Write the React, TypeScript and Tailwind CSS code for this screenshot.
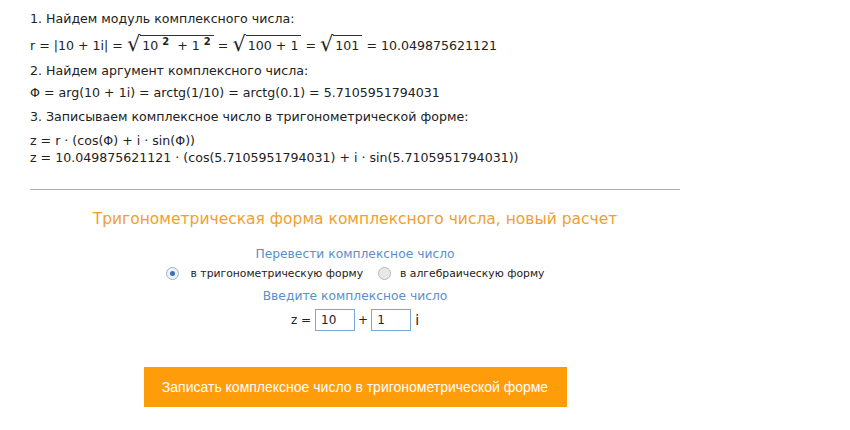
import React from 'react';

function Sqrt({ children }: { children: React.ReactNode }) {
  return (
    <span className="inline-flex items-end">
      <span className="text-[21px] leading-[19px]">√</span>
      <span className="border-t border-[#333] leading-[16px] pt-[2px] pl-[2px] pr-[3px]">{children}</span>
    </span>
  );
}

export default function App() {
  return (
    <div className="w-[850px] h-[430px] bg-white text-[#222] font-['Verdana','DejaVu_Sans',sans-serif]">
      <div className="w-[650px] ml-[30px] pt-[10px] text-[12.6px] leading-[17px]">
        <div>1. Найдем модуль комплексного числа:</div>
        <div className="mt-[8px] flex items-end whitespace-pre h-[19px]">
          <span>r = |10 + 1i| = </span>
          <Sqrt>
            10 <sup className="font-bold text-[10px]">2</sup>  + 1 <sup className="font-bold text-[10px]">2</sup>
          </Sqrt>
          <span> = </span>
          <Sqrt>100 + 1</Sqrt>
          <span> = </span>
          <Sqrt>101</Sqrt>
          <span> = 10.049875621121</span>
        </div>
        <div className="mt-[8px]">2. Найдем аргумент комплексного числа:</div>
        <div className="mt-[5px]">Φ = arg(10 + 1i) = arctg(1/10) = arctg(0.1) = 5.7105951794031</div>
        <div className="mt-[7px]">3. Записываем комплексное число в тригонометрической форме:</div>
        <div className="mt-[7px]">z = r · (cos(Φ) + i · sin(Φ))</div>
        <div>z = 10.049875621121 · (cos(5.7105951794031) + i · sin(5.7105951794031))</div>

        <div className="mt-[23px] h-px bg-[#b0b0b0]" />

        <div className="mt-[18px] flex flex-col items-center">
          <div className="text-[15.5px] leading-[22px] text-[#f0a030]">
            Тригонометрическая форма комплексного числа, новый расчет
          </div>
          <div className="mt-[16px] text-[12.3px] text-[#5a8fc8]">Перевести комплексное число</div>
          <div className="mt-[2px] flex items-center text-[10.8px]">
            <label className="flex items-center">
              <span className="w-[13px] h-[13px] rounded-full border border-[#9bb3cf] bg-[#eef3f9] flex items-center justify-center">
                <span className="w-[5px] h-[5px] rounded-full bg-[#3d6fb0]" />
              </span>
              <span className="ml-[12px]">в тригонометрическую форму</span>
            </label>
            <label className="flex items-center ml-[15px]">
              <span className="w-[13px] h-[13px] rounded-full border border-[#b8b8b8] bg-[#e8e8e8]" />
              <span className="ml-[9px]">в алгебраическую форму</span>
            </label>
          </div>
          <div className="mt-[6px] text-[12.3px] text-[#5a8fc8]">Введите комплексное число</div>
          <div className="mt-[4px] flex items-center text-[12px]">
            <span>z =</span>
            <input
              defaultValue="10"
              className="ml-[4px] w-[40px] h-[22px] border border-[#7aa7d6] px-[5px] text-[12px] outline-none"
            />
            <span className="ml-[3px] mr-[3px]">+</span>
            <input
              defaultValue="1"
              className="w-[40px] h-[22px] border border-[#7aa7d6] px-[5px] text-[12px] outline-none"
            />
            <span className="ml-[4px] text-[14px]">i</span>
          </div>
          <button className="mt-[36px] w-[423px] h-[40px] bg-[#ff9c0a] text-white text-[14px] font-['Liberation_Sans',Arial,sans-serif]">
            Записать комплексное число в тригонометрической форме
          </button>
        </div>
      </div>
    </div>
  );
}
